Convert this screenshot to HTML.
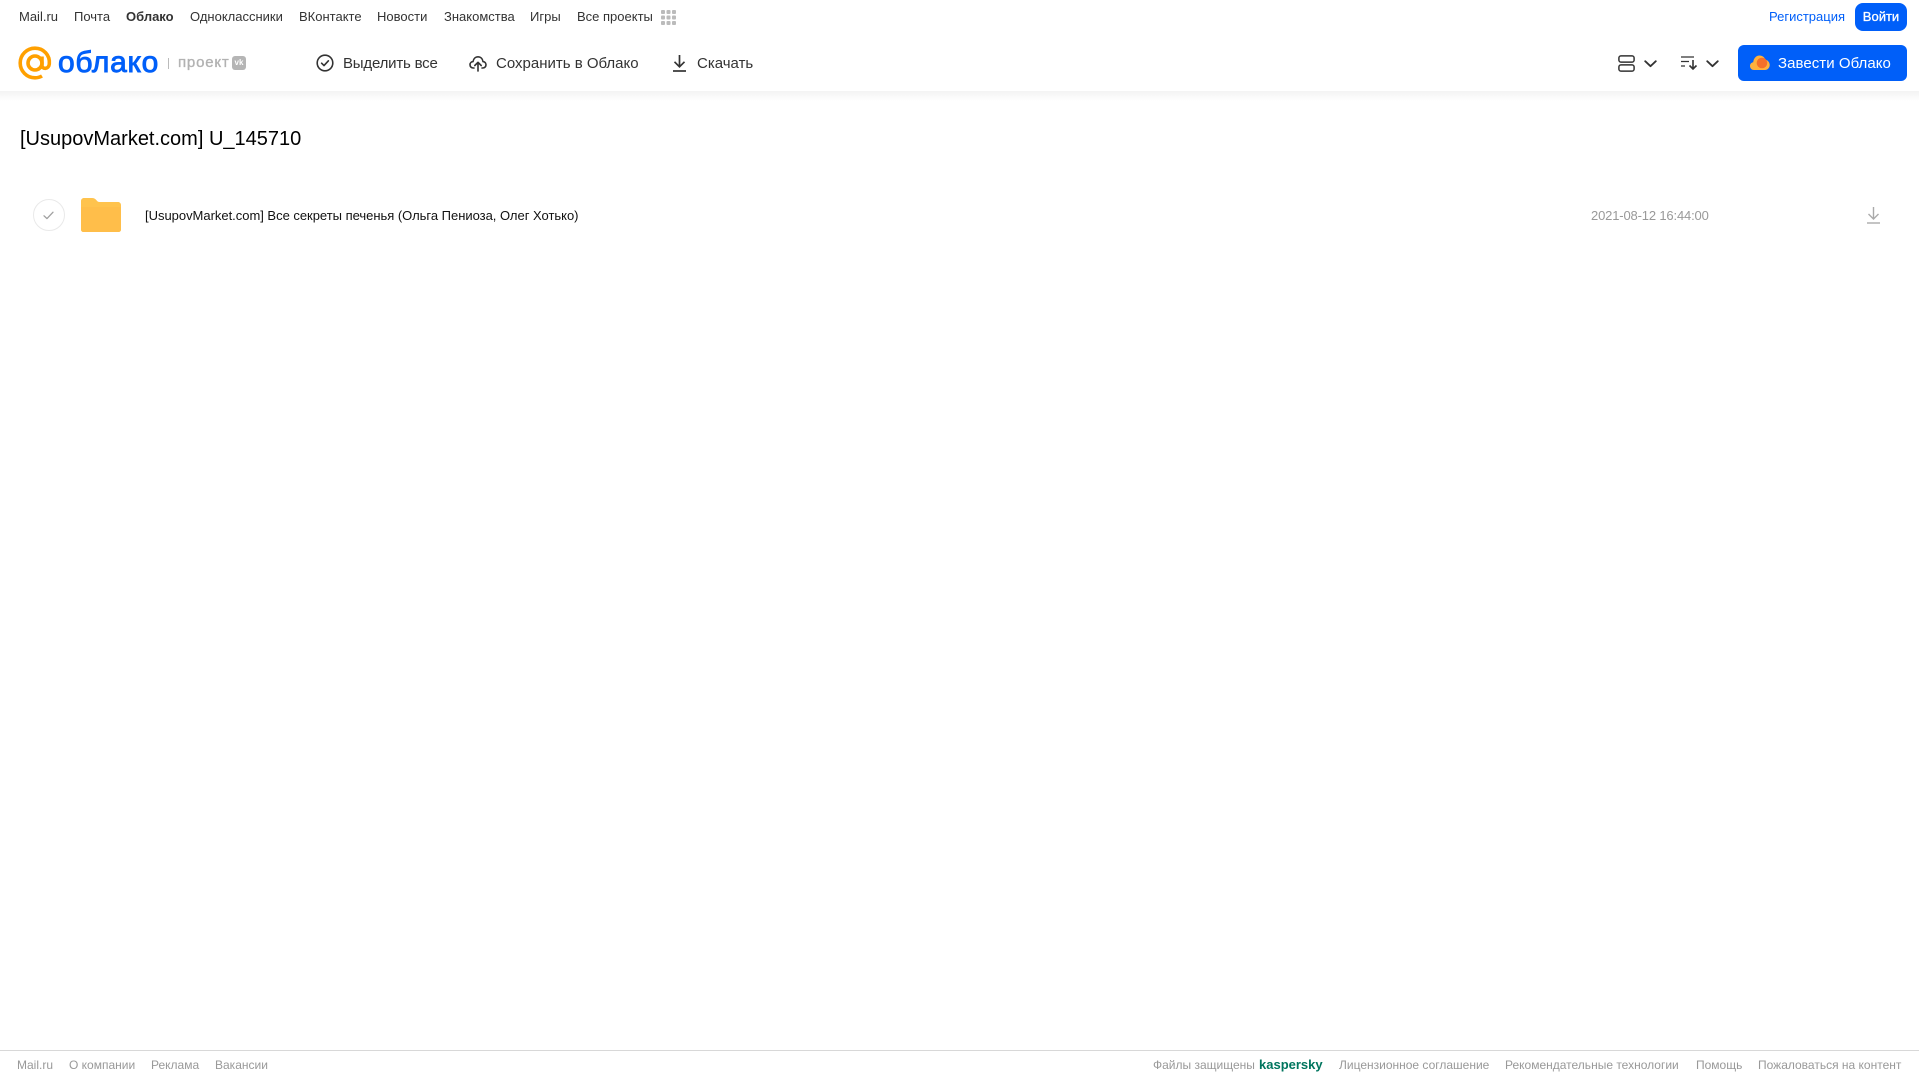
<!DOCTYPE html>
<html lang="ru">
<head>
<meta charset="utf-8">
<title>Облако</title>
<style>
html,body{margin:0;padding:0;background:#fff;width:1919px;height:1079px;overflow:hidden}
body{position:relative;font-family:"Liberation Sans",Arial,sans-serif}
.t{position:absolute;white-space:nowrap;line-height:20px;height:20px}
.n{top:7px;font-size:13px;color:#333}
.a{top:54px;font-size:15px;color:#333}
.f{top:1055px;font-size:12px;color:#999}
svg{position:absolute;overflow:visible}
</style>
</head>
<body>
<div style="position:absolute;left:0;top:91px;width:1919px;height:10px;background:linear-gradient(#f3f3f3,#fff)"></div>

<span class="t n" style="left:19px">Mail.ru</span>
<span class="t n" style="left:74px">Почта</span>
<span class="t n" style="left:126px;font-weight:700">Облако</span>
<span class="t n" style="left:190px">Одноклассники</span>
<span class="t n" style="left:299px">ВКонтакте</span>
<span class="t n" style="left:377px">Новости</span>
<span class="t n" style="left:444px">Знакомства</span>
<span class="t n" style="left:530px">Игры</span>
<span class="t n" style="left:577px">Все проекты</span>
<svg style="left:661px;top:10px" width="15" height="15" fill="#bbb"><rect width="4" height="4" rx="1"/><rect x="5.5" width="4" height="4" rx="1"/><rect x="11" width="4" height="4" rx="1"/><rect y="5.5" width="4" height="4" rx="1"/><rect x="5.5" y="5.5" width="4" height="4" rx="1"/><rect x="11" y="5.5" width="4" height="4" rx="1"/><rect y="11" width="4" height="4" rx="1"/><rect x="5.5" y="11" width="4" height="4" rx="1"/><rect x="11" y="11" width="4" height="4" rx="1"/></svg>

<span class="t n" style="left:1769px;color:#005ff9">Регистрация</span>
<div style="position:absolute;left:1855px;top:3px;width:52px;height:28px;background:#005ff9;border-radius:8px;color:#fff;font-size:13px;line-height:27px;text-align:center;-webkit-text-stroke:.3px #fff">Войти</div>

<svg style="left:18px;top:46px" width="34" height="34" viewBox="0 0 34 34" fill="none" stroke="#ffa000" stroke-width="3.6"><circle cx="17" cy="17" r="7"/><path d="M24 10.5V19.5C24 23.5 30.8 23.5 31.3 18C32.2 9 25.5 2.2 17 2.2C8.8 2.2 2.2 8.8 2.2 17C2.2 25.2 8.8 31.8 17 31.8C19.6 31.8 22 31.2 24 30"/></svg>
<span class="t" style="left:58px;top:46px;font-size:30px;line-height:34px;height:34px;color:#005ff9;letter-spacing:.7px;-webkit-text-stroke:.9px #005ff9">облако</span>
<div style="position:absolute;left:168px;top:58px;width:1px;height:11px;background:#bbb"></div>
<span class="t" style="left:178px;top:53px;font-size:15px;color:#b2b2b2;letter-spacing:.8px;-webkit-text-stroke:.35px #b2b2b2">проект</span>
<div style="position:absolute;left:232px;top:56px;width:14px;height:14px;background:#b5b5b5;border-radius:3px;color:#fff;font-size:8px;font-weight:700;line-height:14px;text-align:center">vk</div>

<svg style="left:316px;top:54px" width="18" height="18" viewBox="0 0 18 18" fill="none" stroke="#333" stroke-width="1.6"><circle cx="9" cy="9" r="7.8"/><path d="M5.6 9.2L8 11.6L12.4 6.8" stroke-linecap="round" stroke-linejoin="round"/></svg>
<span class="t a" style="left:343px;letter-spacing:-.2px">Выделить все</span>

<svg style="left:469px;top:54px" width="18" height="18" viewBox="0 0 18 18" fill="none" stroke="#333" stroke-width="1.6" stroke-linecap="round" stroke-linejoin="round"><path d="M5 14H4.2C2.3 14 1 12.5 1 10.8C1 9 2.3 7.7 4 7.6C4.5 4.6 6.5 2.8 9 2.8C11.6 2.8 13.6 4.7 14 7.6C15.7 7.8 17 9 17 10.8C17 12.5 15.7 14 13.8 14H13"/><path d="M9 17V8.5M5.8 11.5L9 8.3L12.2 11.5"/></svg>
<span class="t a" style="left:496px">Сохранить в Облако</span>

<svg style="left:672px;top:54px" width="15" height="18" viewBox="0 0 15 18" fill="none" stroke="#333" stroke-width="1.7"><path d="M7.5 1V12.5M2.5 7.8L7.5 12.8L12.5 7.8"/><path d="M1 17H14"/></svg>
<span class="t a" style="left:697px">Скачать</span>

<svg style="left:1618px;top:55px" width="17" height="17" viewBox="0 0 17 17" fill="none" stroke="#333" stroke-width="1.5"><rect x=".9" y=".9" width="15.2" height="6.2" rx="2"/><rect x=".9" y="9.9" width="15.2" height="6.2" rx="2"/></svg>
<svg style="left:1644px;top:60px" width="13" height="8" viewBox="0 0 13 8" fill="none" stroke="#333" stroke-width="1.8" stroke-linecap="round" stroke-linejoin="round"><path d="M1.2 1.2L6.5 6.2L11.8 1.2"/></svg>
<svg style="left:1681px;top:56px" width="17" height="14" viewBox="0 0 17 14" fill="none" stroke="#333" stroke-width="1.3"><path d="M0 1H13M0 5.5H8M0 10H4"/><path d="M12 4V13M8.5 9.5L12 13L15.5 9.5" stroke-width="1.6"/></svg>
<svg style="left:1706px;top:60px" width="13" height="8" viewBox="0 0 13 8" fill="none" stroke="#333" stroke-width="1.8" stroke-linecap="round" stroke-linejoin="round"><path d="M1.2 1.2L6.5 6.2L11.8 1.2"/></svg>

<div style="position:absolute;left:1738px;top:45px;width:169px;height:36px;background:#005ff9;border-radius:6px"></div>
<svg style="left:1750px;top:54px" width="20" height="17" viewBox="0 0 20 17"><path d="M4 16C1.8 16 0 14.3 0 12C0 10 1.3 8.5 3.2 8.2C3.6 4.5 6 1.5 9.5 1.5C12.5 1.5 14.6 3.4 15.4 5.8C17.9 6.2 19.7 8.5 19.7 11C19.7 13.8 17.6 16 15 16Z" fill="#ffb13d"/><circle cx="12" cy="9" r="5.3" fill="#f4702a"/></svg>
<span class="t" style="left:1778px;top:54px;font-size:15px;color:#fff;letter-spacing:.05px">Завести Облако</span>

<span class="t" style="left:20px;top:126px;font-size:20px;line-height:26px;height:26px;color:#000">[UsupovMarket.com] U_145710</span>

<div style="position:absolute;left:33px;top:199px;width:30px;height:30px;border:1px solid #e9e9e9;border-radius:50%"></div>
<svg style="left:43px;top:211px" width="11" height="9" viewBox="0 0 11 9" fill="none" stroke="#a0a0a0" stroke-width="1.3" stroke-linecap="round" stroke-linejoin="round"><path d="M1 4.8L4 7.6L10 1.2"/></svg>
<svg style="left:81px;top:198px" width="40" height="34" viewBox="0 0 40 34"><path d="M0 3C0 1.3 1.3 0 3 0H11C13 0 14.5 1 15.5 2.3C16.3 3.4 17 4 18.5 4H37C38.7 4 40 5.3 40 7V31.5C40 32.9 38.9 34 37.5 34H2.5C1.1 34 0 32.9 0 31.5Z" fill="#ffc34d"/><path d="M0 9H40V31.5C40 32.9 38.9 34 37.5 34H2.5C1.1 34 0 32.9 0 31.5Z" fill="#ffbe4a"/></svg>
<span class="t" style="left:145px;top:206px;font-size:13px;color:#111;letter-spacing:-.02px">[UsupovMarket.com] Все секреты печенья (Ольга Пениоза, Олег Хотько)</span>
<span class="t" style="left:1591px;top:206px;font-size:13px;color:#999;letter-spacing:-.16px">2021-08-12 16:44:00</span>
<svg style="left:1867px;top:207px" width="13" height="17" viewBox="0 0 13 17" fill="none" stroke="#aaa" stroke-width="1.4"><path d="M6.5 0V11.5M1.5 7L6.5 12L11.5 7"/><path d="M0 16H13"/></svg>

<div style="position:absolute;left:0;top:1050px;width:1919px;height:1px;background:#d8d8d8"></div>
<span class="t f" style="left:17px">Mail.ru</span>
<span class="t f" style="left:69px">О компании</span>
<span class="t f" style="left:151px">Реклама</span>
<span class="t f" style="left:215px">Вакансии</span>
<span class="t f" style="left:1153px">Файлы защищены</span>
<span class="t f" style="left:1259px;font-size:13px;font-weight:700;color:#00755e">kaspersky</span>
<span class="t f" style="left:1339px">Лицензионное соглашение</span>
<span class="t f" style="left:1505px">Рекомендательные технологии</span>
<span class="t f" style="left:1696px">Помощь</span>
<span class="t f" style="left:1758px">Пожаловаться на контент</span>
</body>
</html>
